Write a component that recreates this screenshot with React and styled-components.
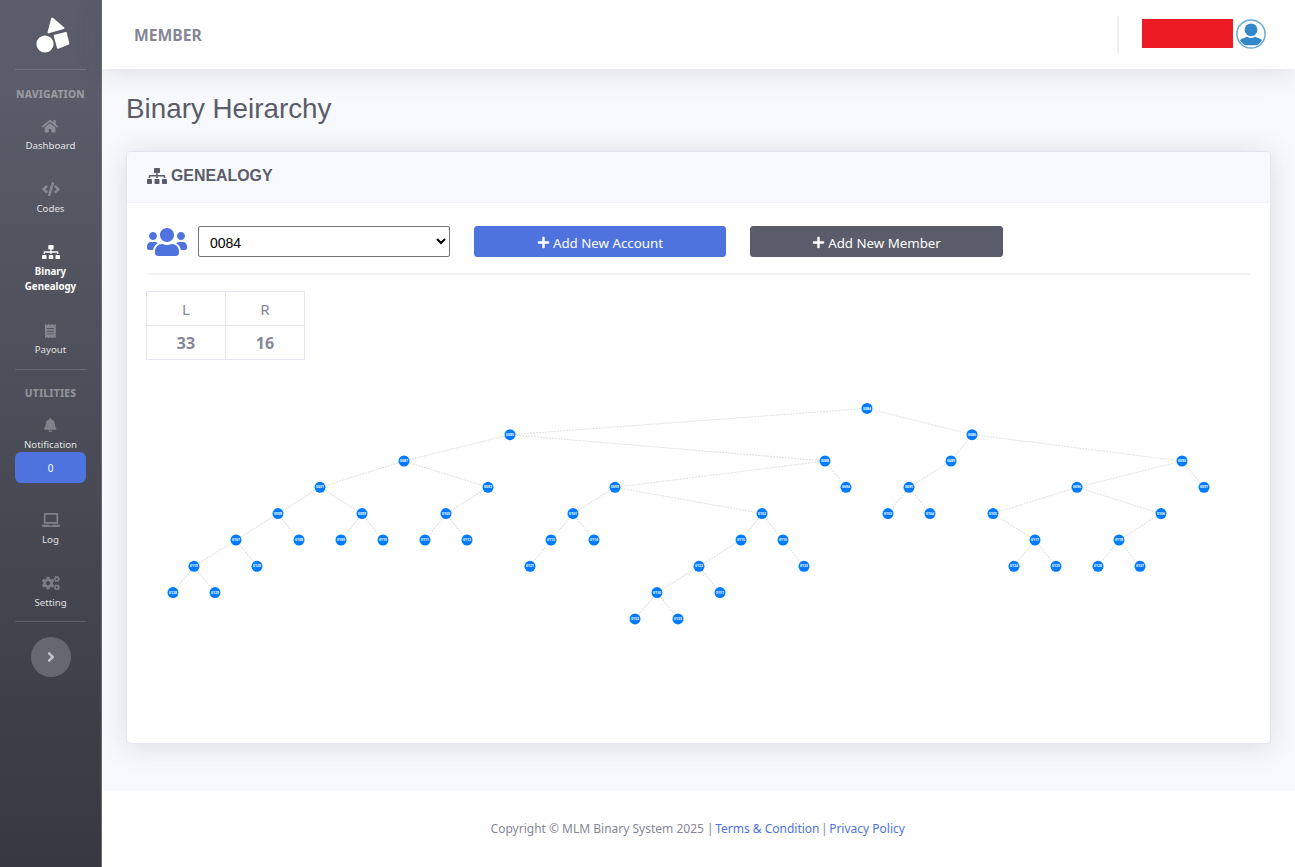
import React from 'react';
import styled, { createGlobalStyle } from 'styled-components';
import { FaHome, FaCode, FaSitemap, FaReceipt, FaBell, FaLaptop, FaCogs, FaAngleRight, FaUsers, FaPlus } from 'react-icons/fa';

const Global = createGlobalStyle`
  html, body { margin: 0; padding: 0; background: #fff; }
  * { box-sizing: border-box; }
  body { font-family: "Noto Sans", "Open Sans", sans-serif; color: #858796; }
`;

const Page = styled.div`
  display: flex;
  width: 1295px;
  height: 867px;
  overflow: hidden;
`;

const Sidebar = styled.aside`
  width: 102px;
  flex: none;
  height: 867px;
  padding: 0 15px;
  display: flex;
  flex-direction: column;
  align-items: stretch;
  background: linear-gradient(180deg, #5a5c69 10%, #373840 100%);
  border-right: 1px solid #6b6c75;
`;

const Brand = styled.div`
  height: 70px;
  flex: none;
  display: flex;
  justify-content: center;
  padding-top: 17px;
  border-bottom: 1px solid rgba(255, 255, 255, 0.15);
`;

const SideHeading = styled.div`
  flex: none;
  text-align: center;
  font-size: 10.2px;
  font-weight: 800;
  line-height: 14px;
  box-sizing: content-box;
  letter-spacing: 0.02em;
  text-transform: uppercase;
  color: rgba(255, 255, 255, 0.4);
  padding-top: ${(p) => p.$top}px;
`;

const NavItem = styled.a`
  flex: none;
  display: flex;
  flex-direction: column;
  align-items: center;
  text-align: center;
  margin: 0 -8px;
  height: ${(p) => p.$height}px;
  padding-top: ${(p) => p.$pad}px;
  font-size: 9.7px;
  line-height: 15px;
  font-weight: ${(p) => (p.$active ? 700 : 400)};
  color: ${(p) => (p.$active ? '#fff' : 'rgba(255,255,255,0.85)')};
  svg {
    flex: none;
    width: ${(p) => p.$iconWidth}px;
    height: 14.4px;
    margin-bottom: 4.6px;
    color: ${(p) => (p.$active ? '#fff' : 'rgba(255,255,255,0.3)')};
  }
`;

const SideRule = styled.div`
  flex: none;
  height: 1px;
  background: rgba(255, 255, 255, 0.15);
`;

const CountBadge = styled.div`
  flex: none;
  height: 31px;
  border-radius: 6px;
  background: #4e73df;
  color: #fff;
  font-size: 10px;
  display: flex;
  align-items: center;
  justify-content: center;
`;

const Toggle = styled.button`
  flex: none;
  align-self: center;
  width: 40px;
  height: 40px;
  margin-top: 15px;
  padding: 0;
  border: 0;
  border-radius: 50%;
  background: rgba(255, 255, 255, 0.2);
  color: rgba(255, 255, 255, 0.6);
  display: flex;
  align-items: center;
  justify-content: center;
  svg { width: 16px; height: 16px; }
`;

const Main = styled.div`
  flex: 1;
  display: flex;
  flex-direction: column;
  background: #f8f9fc;
  min-width: 0;
`;

const Header = styled.header`
  height: 69px;
  flex: none;
  display: flex;
  align-items: center;
  background: #fff;
  box-shadow: 0 2.4px 28px rgba(58, 59, 69, 0.15);
  padding: 0 29px 2px 32px;
  position: relative;
`;

const HeaderTitle = styled.div`
  flex: 1;
  margin-top: 2px;
  font-size: 15.7px;
  font-weight: 700;
  color: #858796;
`;

const HeaderRule = styled.div`
  width: 2px;
  height: 37px;
  margin-top: 2px;
  background: #eef0f6;
  margin-right: 23px;
`;

const Redacted = styled.div`
  width: 91px;
  height: 29px;
  background: #ed1c24;
  margin-right: 3px;
`;

const Content = styled.main`
  flex: 1;
  padding: 0 24px;
`;

const Title = styled.h1`
  margin: 0;
  padding-top: 23px;
  height: 82px;
  font-family: "Liberation Sans", Arial, sans-serif;
  font-size: 27.8px;
  line-height: 34px;
  font-weight: 400;
  color: #5a5c69;
`;

const Card = styled.section`
  height: 593px;
  background: #fff;
  border: 1px solid #e3e6f0;
  border-radius: 5px;
  box-shadow: 0 2.4px 28px rgba(58, 59, 69, 0.15);
  overflow: hidden;
`;

const CardHead = styled.div`
  height: 51px;
  display: flex;
  align-items: center;
  gap: 4px;
  padding: 0 0 2px 20px;
  background: #f8f9fc;
  border-bottom: 1px solid #f1f2f7;
  font-family: "Liberation Sans", Arial, sans-serif;
  font-size: 15.9px;
  font-weight: 700;
  color: #5a5c69;
  svg { width: 20px; height: 16px; }
`;

const CardBody = styled.div`
  padding: 23px 20px 0;
`;

const Controls = styled.div`
  display: flex;
  align-items: center;
  height: 31px;
  color: #4e73df;
  svg.users { width: 40px; height: 32px; margin-right: 11px; }
`;

const MemberSelect = styled.select`
  width: 252px;
  height: 31px;
  margin-right: 24px;
  padding: 2px 0 0 7px;
  background: #fff;
  border: 1px solid #767676;
  border-radius: 2px;
  font-family: "Liberation Sans", Arial, sans-serif;
  font-size: 14px;
  color: #000;
`;

const ActionButton = styled.button`
  width: ${(p) => p.$width}px;
  height: 31px;
  margin-right: 24px;
  padding: 2px 0 0;
  border: 1px solid ${(p) => p.$bg};
  border-radius: 3px;
  background: ${(p) => p.$bg};
  color: #fff;
  font-family: "Noto Sans", "Open Sans", sans-serif;
  font-size: 13.3px;
  display: flex;
  align-items: center;
  justify-content: center;
  gap: 3px;
  svg { width: 13px; height: 13px; }
`;

const Rule = styled.hr`
  margin: 16px 0 16px;
  border: 0;
  border-top: 2px solid #f1f1f3;
`;

const Counts = styled.table`
  border-collapse: collapse;
  width: 159px;
  margin-left: -1px;
  table-layout: fixed;
  text-align: center;
  color: #858796;
  td, th {
    border: 1px solid #e3e6f0;
    height: 34px;
    padding: 0;
  }
  th { font-size: 15.2px; font-weight: 400; }
  td { font-size: 16px; font-weight: 700; }
`;

const Tree = styled.svg`
  display: block;
  margin-top: 20px;
`;

const Footer = styled.footer`
  height: 76px;
  flex: none;
  background: #fff;
  display: flex;
  align-items: center;
  justify-content: center;
  padding-bottom: 2px;
  font-size: 12px;
  color: #858796;
`;

const FooterLink = styled.a`
  color: #4e73df;
  margin: 0 1.5px;
`;

const R = [408.4, 434.7, 461, 487.3, 513.6, 540, 566.3, 592.6, 618.9];

const nodes = {
  a: [867, R[0], '0084'], b: [510, R[1], '0085'], c: [972, R[1], '0086'],
  d: [404, R[2], '0087'], e: [825, R[2], '0088'], f: [951, R[2], '0089'], g: [1182, R[2], '0090'],
  h: [320, R[3], '0091'], i: [488, R[3], '0092'], j: [615, R[3], '0093'], k: [846, R[3], '0094'],
  l: [909, R[3], '0095'], m: [1077, R[3], '0096'], n: [1204, R[3], '0097'],
  o: [278, R[4], '0098'], p: [362, R[4], '0099'], q: [446, R[4], '0100'], r: [573, R[4], '0101'],
  s: [762, R[4], '0102'], t: [888, R[4], '0103'], u: [930, R[4], '0104'], v: [993, R[4], '0105'], w: [1161, R[4], '0106'],
  x: [236, R[5], '0107'], y: [299, R[5], '0108'], z: [341, R[5], '0109'], A: [383, R[5], '0110'],
  B: [425, R[5], '0111'], C: [467, R[5], '0112'], D: [551, R[5], '0113'], E: [594, R[5], '0114'],
  F: [741, R[5], '0115'], G: [783, R[5], '0116'], H: [1035, R[5], '0117'], I: [1119, R[5], '0118'],
  J: [194, R[6], '0119'], K: [257, R[6], '0120'], L: [530, R[6], '0121'], M: [699, R[6], '0122'],
  N: [804, R[6], '0123'], O: [1014, R[6], '0124'], P: [1056, R[6], '0125'], Q: [1098, R[6], '0126'], S2: [1140, R[6], '0127'],
  S: [173, R[7], '0128'], T: [215, R[7], '0129'], U: [657, R[7], '0130'], V: [720, R[7], '0131'],
  W: [635, R[8], '0132'], X: [678, R[8], '0133'],
};

const edges = [
  ['a', 'b'], ['a', 'c'], ['b', 'd'], ['b', 'e'], ['d', 'h'], ['d', 'i'], ['h', 'o'], ['h', 'p'],
  ['o', 'x'], ['o', 'y'], ['x', 'J'], ['x', 'K'], ['J', 'S'], ['J', 'T'], ['p', 'z'], ['p', 'A'],
  ['i', 'q'], ['q', 'B'], ['q', 'C'], ['e', 'j'], ['e', 'k'], ['j', 'r'], ['j', 's'], ['r', 'D'],
  ['r', 'E'], ['D', 'L'], ['s', 'F'], ['s', 'G'], ['F', 'M'], ['G', 'N'], ['M', 'U'], ['M', 'V'],
  ['U', 'W'], ['U', 'X'], ['c', 'f'], ['c', 'g'], ['f', 'l'], ['l', 't'], ['l', 'u'], ['g', 'm'],
  ['g', 'n'], ['m', 'v'], ['m', 'w'], ['v', 'H'], ['H', 'O'], ['H', 'P'], ['w', 'I'], ['I', 'Q'], ['I', 'S2'],
];

const Logo = () => (
  <svg width="36" height="36" viewBox="0 0 36 36" fill="#fff" stroke="#fff" strokeWidth="2" strokeLinejoin="round" overflow="visible">
    <circle cx="12" cy="27" r="7.6" />
    <polygon points="19.2,1.6 15.5,15.2 30.4,11" />
    <polygon points="21.7,18.8 32.8,15.9 35.3,26.6 25,30.8" />
  </svg>
);

const Avatar = () => (
  <svg width="30" height="30" viewBox="0 0 32 32">
    <defs>
      <clipPath id="avatar-clip"><circle cx="16" cy="16" r="13.5" /></clipPath>
    </defs>
    <circle cx="16" cy="16" r="15" fill="#fff" stroke="#6aa8d6" strokeWidth="1.6" />
    <g clipPath="url(#avatar-clip)" fill="#3388c9">
      <circle cx="16" cy="11.5" r="6.8" />
      <path d="M3 28 V24 Q4 21.5 9 20 L12 19 Q16 21.5 20 19 L23 20 Q28 21.5 29 24 V28 Z" />
    </g>
  </svg>
);

const Nav = ({ icon: Icon, children, ...rest }) => (
  <NavItem {...rest}><Icon />{children}</NavItem>
);

export default function App() {
  return (
    <Page>
      <Global />
      <Sidebar>
        <Brand><Logo /></Brand>
        <SideHeading $top={17}>Navigation</SideHeading>
        <Nav icon={FaHome} $iconWidth={16.2} $height={63} $pad={18}>Dashboard</Nav>
        <Nav icon={FaCode} $iconWidth={18} $height={63} $pad={18}>Codes</Nav>
        <Nav icon={FaSitemap} $iconWidth={18} $height={79} $pad={18} $active>Binary<br />Genealogy</Nav>
        <Nav icon={FaReceipt} $iconWidth={10.8} $height={63} $pad={17.5}>Payout</Nav>
        <SideRule />
        <SideHeading $top={16}>Utilities</SideHeading>
        <Nav icon={FaBell} $iconWidth={12.6} $height={52} $pad={18}>Notification</Nav>
        <CountBadge>0</CountBadge>
        <Nav icon={FaLaptop} $iconWidth={18} $height={63} $pad={30}>Log</Nav>
        <Nav icon={FaCogs} $iconWidth={18} $height={75} $pad={30}>Setting</Nav>
        <SideRule />
        <Toggle aria-label="Toggle sidebar"><FaAngleRight /></Toggle>
      </Sidebar>
      <Main>
        <Header>
          <HeaderTitle>MEMBER</HeaderTitle>
          <HeaderRule />
          <Redacted />
          <Avatar />
        </Header>
        <Content>
          <Title>Binary Heirarchy</Title>
          <Card>
            <CardHead><FaSitemap />GENEALOGY</CardHead>
            <CardBody>
              <Controls>
                <FaUsers className="users" />
                <MemberSelect defaultValue="0084"><option>0084</option></MemberSelect>
                <ActionButton $width={252} $bg="#4e73df"><FaPlus />Add New Account</ActionButton>
                <ActionButton $width={253} $bg="#5a5c69"><FaPlus />Add New Member</ActionButton>
              </Controls>
              <Rule />
              <Counts>
                <thead><tr><th>L</th><th>R</th></tr></thead>
                <tbody><tr><td>33</td><td>16</td></tr></tbody>
              </Counts>
              <Tree width="1104" height="260" viewBox="147 380 1104 260">
                {edges.map(([from, to]) => {
                  const [x1, y1] = nodes[from];
                  const [x2, y2] = nodes[to];
                  return <line key={from + to} x1={x1} y1={y1} x2={x2} y2={y2} stroke="#e2e2e2" strokeWidth="1.1" strokeDasharray="2 1" />;
                })}
                {Object.entries(nodes).map(([k, [x, y, label]]) => (
                  <g key={k}>
                    <circle cx={x} cy={y} r="5.5" fill="#007bff" />
                    <text x={x} y={y + 1.1} textAnchor="middle" fontSize="3.4" fontWeight="700" fill="#fff" fontFamily="Noto Sans, sans-serif">{label}</text>
                  </g>
                ))}
              </Tree>
            </CardBody>
          </Card>
        </Content>
        <Footer>
          Copyright © MLM Binary System 2025 |<FooterLink>Terms &amp; Condition</FooterLink>|<FooterLink>Privacy Policy</FooterLink>
        </Footer>
      </Main>
    </Page>
  );
}
